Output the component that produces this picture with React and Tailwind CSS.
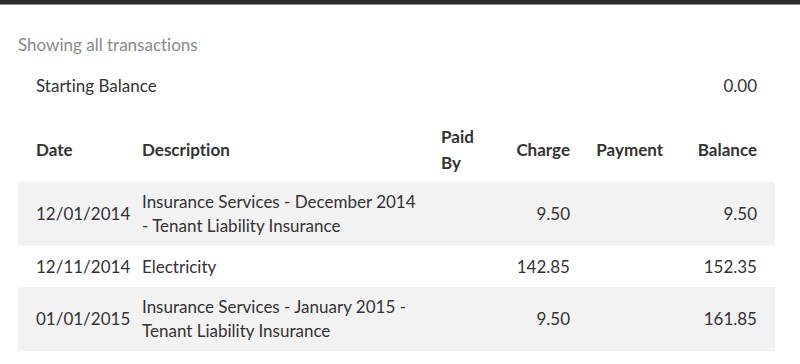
import React from "react";

const rows = [
    {
        date: "12/01/2014",
        desc: ["Insurance Services - December 2014", "- Tenant Liability Insurance"],
        charge: "9.50",
        balance: "9.50",
        shaded: true,
    },
    {
        date: "12/11/2014",
        desc: ["Electricity"],
        charge: "142.85",
        balance: "152.35",
        shaded: false,
    },
    {
        date: "01/01/2015",
        desc: ["Insurance Services - January 2015 -", "Tenant Liability Insurance"],
        charge: "9.50",
        balance: "161.85",
        shaded: true,
    },
];

// column template shared by header and rows
const cols = "grid grid-cols-[106px_299px_73px_74px_93px_94px] px-[9px]";

const App = () => {
    return (
        <div
            className="w-[800px] h-[364px] bg-white text-[#333] text-[17px] overflow-hidden [font-variant-ligatures:none]"
            style={{ fontFamily: "Lato, 'Liberation Sans', sans-serif" }}
        >
            {/* top bar */}
            <div className="h-[4px] bg-[#2c2c2c]" />
            <div className="h-[1px] bg-[#8c8c8c]" />

            <div className="pl-[18px] pr-[25px]">
                <p className="mt-[28px] leading-[24px] text-[#8a8a8a]">
                    Showing all transactions
                </p>

                {/* Starting balance */}
                <div className="flex justify-between px-[18px] mt-[17px] leading-[24px]">
                    <span>Starting Balance</span>
                    <span>0.00</span>
                </div>

                {/* Header */}
                <div className={`${cols} mt-[20px] h-[64px] items-center font-bold leading-[26px]`}>
                    <div className="px-[9px]">Date</div>
                    <div className="px-[9px]">Description</div>
                    <div className="px-[9px]">
                        Paid
                        <br />
                        By
                    </div>
                    <div className="px-[9px] text-right">Charge</div>
                    <div className="px-[9px] text-right">Payment</div>
                    <div className="px-[9px] text-right">Balance</div>
                </div>

                {/* Transactions */}
                {rows.map((r, i) => (
                    <div
                        key={i}
                        className={`${cols} items-center leading-[24px] ${
                            r.desc.length > 1 ? "h-[64px]" : "h-[41px]"
                        } ${r.shaded ? "bg-[#f2f2f2]" : "bg-white"}`}
                    >
                        <div className="px-[9px] whitespace-nowrap">{r.date}</div>
                        <div className="px-[9px] whitespace-nowrap">
                            {r.desc.map((d, j) => (
                                <div key={j}>{d}</div>
                            ))}
                        </div>
                        <div className="px-[9px]"></div>
                        <div className="px-[9px] text-right">{r.charge}</div>
                        <div className="px-[9px] text-right"></div>
                        <div className="px-[9px] text-right">{r.balance}</div>
                    </div>
                ))}
            </div>
        </div>
    );
};

export default App;
